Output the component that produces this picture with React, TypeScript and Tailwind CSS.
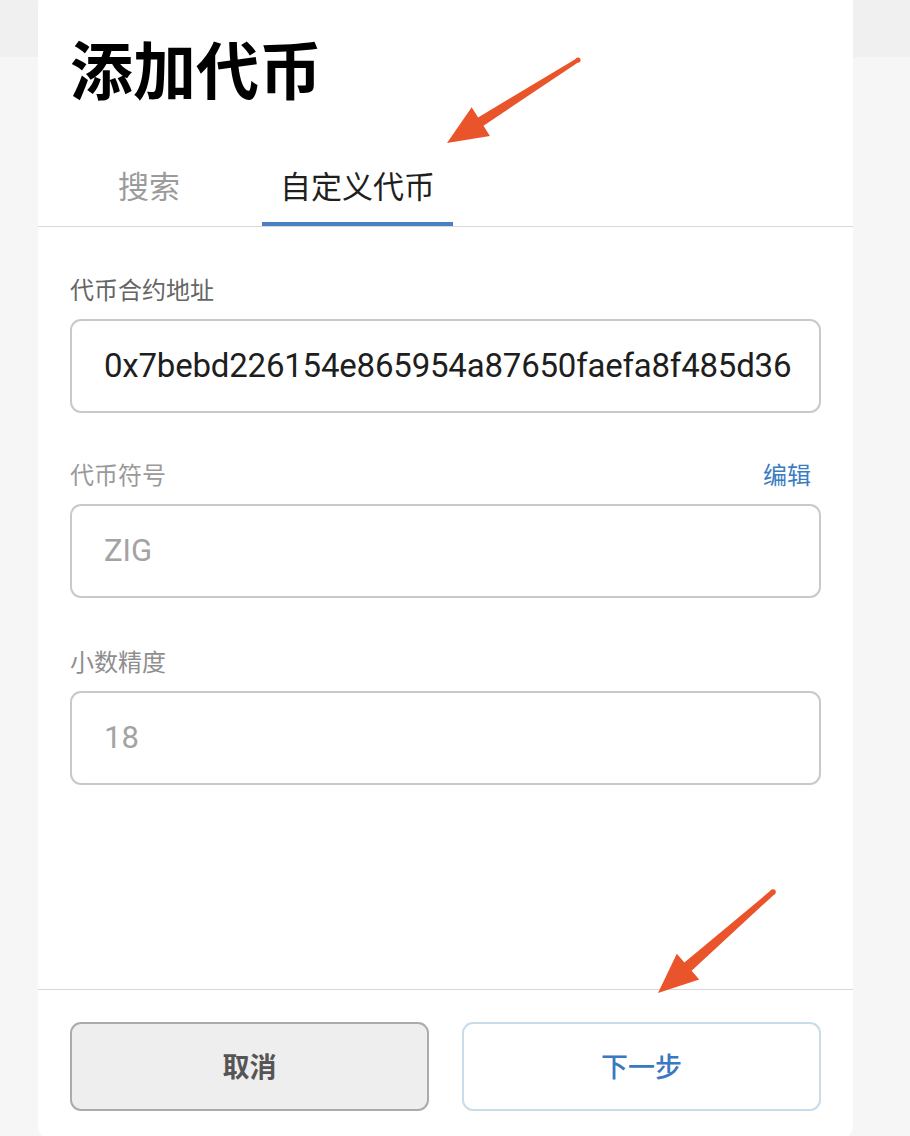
const cjk = "font-['Noto_Sans_CJK_SC',sans-serif]";
const latin = "font-['Roboto','Noto_Sans_CJK_SC',sans-serif]";

const Field = ({
  label,
  value,
  muted,
  action,
  labelTone,
  className = "",
}: {
  label: string;
  value: string;
  muted?: boolean;
  action?: string;
  labelTone: string;
  className?: string;
}) => {
  return (
    <div className={`flex flex-col ${className}`}>
      <div className="flex items-center justify-between mb-[14px]">
        <span className={`${cjk} text-[24px] leading-[32px] ${labelTone}`}>{label}</span>
        {action && (
          <span className={`${cjk} text-[24px] leading-[32px] text-[#3b7dc3] pr-[10px]`}>
            {action}
          </span>
        )}
      </div>
      <div className="h-[94px] rounded-[11px] border-2 border-[#c9c9c9] flex items-center pl-[32px] pr-[20px] overflow-hidden">
        <span
          className={`${latin} whitespace-nowrap ${
            muted ? "text-[31px] text-[#a3a3a3]" : "text-[33px] tracking-[-0.2px] text-[#1e1e1e]"
          }`}
        >
          {value}
        </span>
      </div>
    </div>
  );
};

const Arrows = () => (
  <svg
    className="absolute inset-0 pointer-events-none"
    width="910"
    height="1136"
    viewBox="0 0 910 1136"
  >
    <g fill="#e9542a">
      <polygon points="576.9,58.3 478.1,117.4 471.7,107.2 447,143 489.9,136.0 483.5,125.8 579.1,61.7" />
      <circle cx="578" cy="60" r="2.6" />
      <polygon points="771.3,890.1 684.4,962.5 676.8,953.8 658,993 699.2,979.4 691.6,970.7 774.7,893.9" />
      <circle cx="773" cy="892" r="2.8" />
    </g>
  </svg>
);

export default function App() {
  return (
    <div className="relative w-[910px] h-[1136px] overflow-hidden bg-[linear-gradient(#f0f0f1_0_57px,#f6f6f6_57px)]">
      <div className="ml-[38px] mt-[-10px] w-[815px] h-[1150px] bg-white rounded-[14px] flex flex-col">
        {/* title */}
        <div className="pt-[46px] pl-[32px]">
          <h1 className={`${cjk} text-[63px] leading-[62px] font-bold text-black`}>添加代币</h1>
        </div>

        {/* tabs */}
        <div className="mt-[67px] flex items-end pl-[62px] gap-[64px] border-b-[1.5px] border-[#d8d8d8]">
          <div className="px-[18px] pb-[17px] border-b-4 border-transparent">
            <span className={`${cjk} text-[31px] leading-[40px] text-[#9b9b9b]`}>搜索</span>
          </div>
          <div className="px-[18px] pb-[17px] border-b-4 border-[#4a7fc4]">
            <span className={`${cjk} text-[31px] leading-[40px] text-[#1f1f1f]`}>自定义代币</span>
          </div>
        </div>

        {/* form */}
        <div className="px-[32px] pt-[46px] flex flex-col flex-1">
          <Field
            label="代币合约地址"
            value="0x7bebd226154e865954a87650faefa8f485d36"
            labelTone="text-[#666666]"
          />
          <Field
            label="代币符号"
            value="ZIG"
            muted
            action="编辑"
            labelTone="text-[#9a9a9a]"
            className="mt-[45px]"
          />
          <Field label="小数精度" value="18" muted labelTone="text-[#8e8e8e]" className="mt-[47px]" />
        </div>

        {/* footer */}
        <div className="border-t-[1.5px] border-[#d6d6d6] px-[32px] pt-[32px] pb-[29px] grid grid-cols-2 gap-[33px]">
          <button className="h-[89px] rounded-[11px] border-2 border-[#ababab] bg-[#eeeeee] flex items-center justify-center">
            <span className={`${cjk} text-[27px] font-bold text-[#555555]`}>取消</span>
          </button>
          <button className="h-[89px] rounded-[11px] border-2 border-[#c8dcea] bg-white flex items-center justify-center">
            <span className={`${cjk} text-[27px] font-medium text-[#3a78c0]`}>下一步</span>
          </button>
        </div>
      </div>
      <Arrows />
    </div>
  );
}
